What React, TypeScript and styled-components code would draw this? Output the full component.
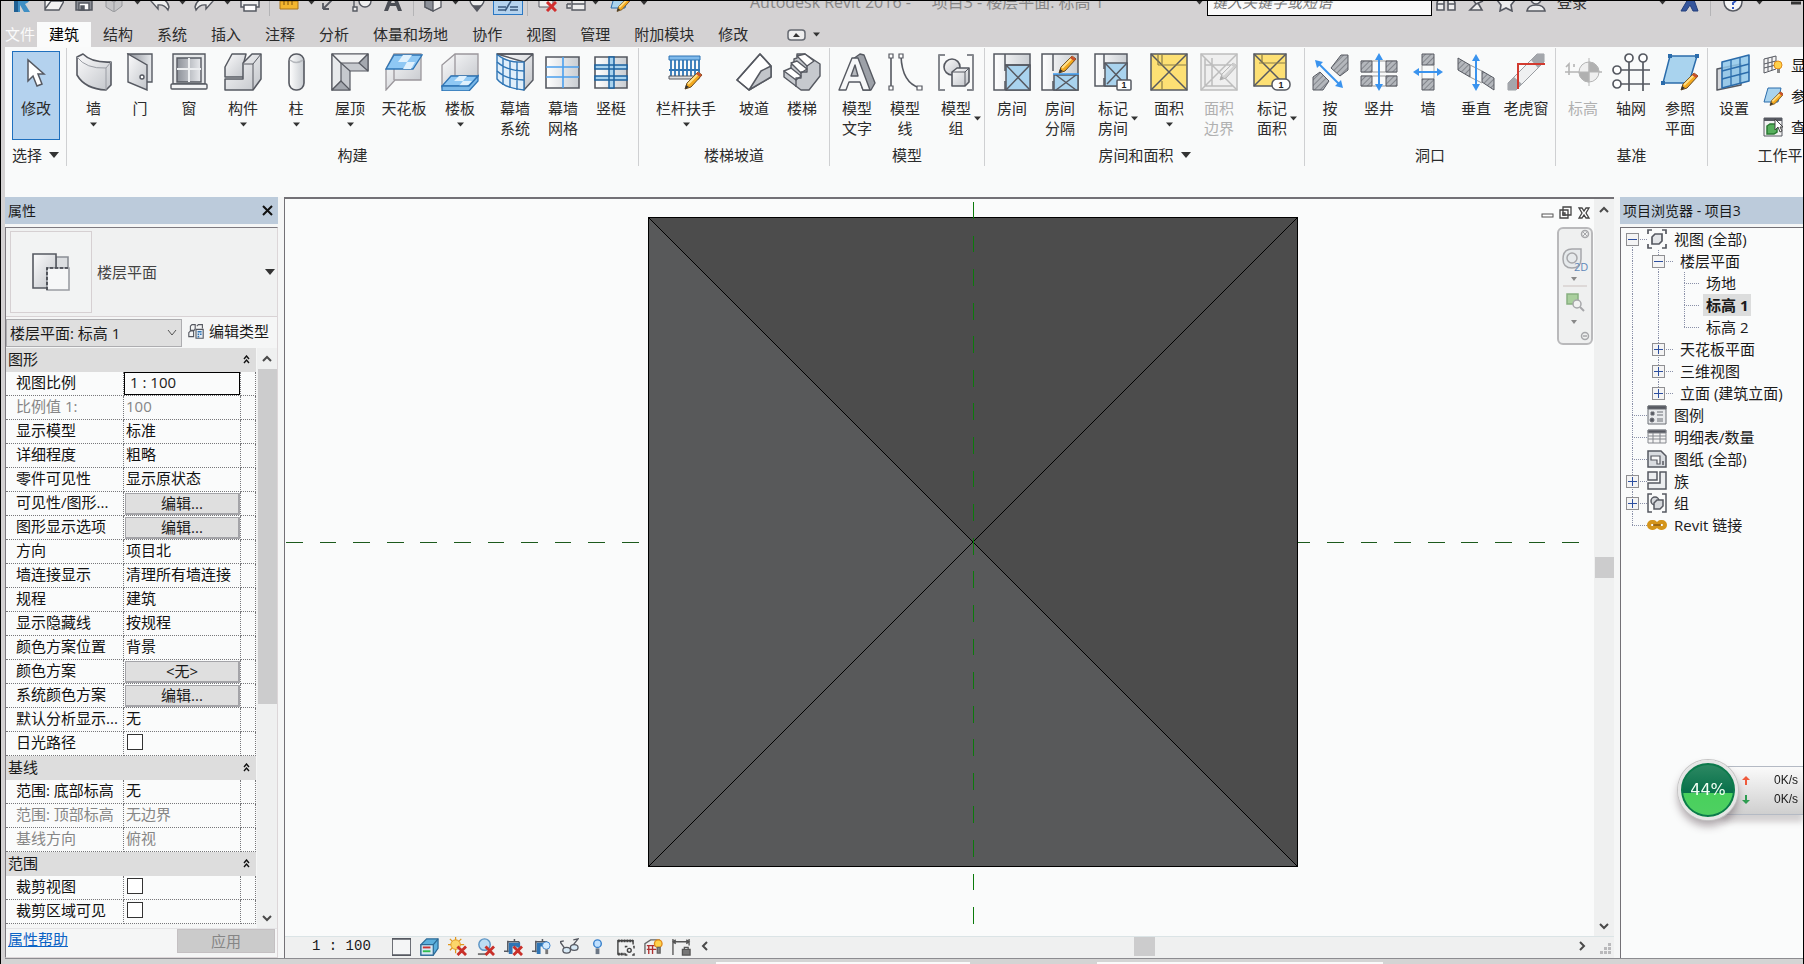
import React from 'react';
import styled, { createGlobalStyle } from 'styled-components';

const Global = createGlobalStyle`
  *, *::before, *::after { box-sizing: border-box; }
  html, body { margin: 0; background: #d4d4d4; }
  body, button, input, select {
    font-family: "Open Sans", "Noto Sans CJK SC", sans-serif;
    font-size: 15px;
    line-height: 20px;
    color: #1a1a1a;
  }
  button { padding: 0; border: 0; background: none; cursor: pointer; }
  svg { display: block; flex: none; }
`;

/* ---------- shell ---------- */

const Frame = styled.div`
  display: flex;
  flex-direction: column;
  height: 100vh;
  min-height: 640px;
  overflow: hidden;
  border: solid #000;
  border-width: 1px 1px 0 1px;
  padding-left: 4px;
  background: #d4d2d3;
`;

const TitleBar = styled.header`
  flex: none;
  height: 21px;
  overflow: hidden;
`;

const TitleItems = styled.div`
  display: flex;
  align-items: center;
  height: 32px;
  margin-top: -15px;
`;

const QuickTool = styled.button<{ $w: number; $active?: boolean }>`
  display: flex;
  flex: none;
  align-items: center;
  justify-content: center;
  width: ${p => p.$w}px;
  height: 26px;
  ${p => p.$active && 'background:#b5d3ee;border:1px solid #2a78c4;'}
`;

const QuickGap = styled.span<{ $w: number }>`
  flex: none;
  width: ${p => p.$w}px;
`;

const QuickRule = styled.span`
  flex: none;
  width: 1px;
  height: 28px;
  background: #b4b4b6;
`;

const WindowTitle = styled.h1`
  flex: 1;
  margin: 0;
  padding-left: 99px;
  font-size: 16px;
  font-weight: 400;
  line-height: 20px;
  color: #868686;
  white-space: pre;
  overflow: hidden;
`;

const Search = styled.input`
  flex: none;
  width: 225px;
  height: 27px;
  padding: 0 4px;
  border: 1px solid #000;
  border-radius: 0;
  background: #fafafa;
  font-style: italic;
  &::placeholder { color: #777; opacity: 1; }
`;

const SignIn = styled.button`
  flex: none;
  width: 40px;
  height: 22px;
  color: #333;
`;

const Tabs = styled.nav`
  display: flex;
  flex: none;
  align-items: stretch;
  height: 25px;
`;

const Tab = styled.button<{ $file?: boolean; $active?: boolean }>`
  flex: none;
  padding: ${p => (p.$file ? '0 2px 0 0' : '0 12px')};
  line-height: 25px;
  color: ${p => (p.$file ? '#fafafa' : '#2b2b2b')};
  ${p => p.$active && 'background:#fafbfb;color:#000;'}
`;

const Collapse = styled.button`
  display: flex;
  align-items: center;
  gap: 7px;
  margin-left: 27px;
`;

/* ---------- ribbon ---------- */

const Ribbon = styled.div`
  display: flex;
  flex: none;
  height: 150px;
  padding-top: 1px;
  overflow: hidden;
  background: #f9fafa;
`;

const Group = styled.section<{ $w: number }>`
  display: flex;
  flex: none;
  flex-direction: column;
  width: ${p => p.$w}px;
  height: 118px;
  border-right: 1px solid #cfd0d2;
`;

const GroupTools = styled.div`
  display: flex;
  flex: 1;
  padding-left: 3px;
`;

const GroupTitle = styled.h2`
  display: flex;
  align-items: center;
  justify-content: center;
  gap: 7px;
  height: 22px;
  margin: 0;
  font-size: 15px;
  font-weight: 400;
  color: #2b2b2b;
  white-space: nowrap;
`;

const Tool = styled.button<{ $w: number; $dim?: boolean }>`
  display: flex;
  flex: none;
  flex-direction: column;
  align-items: center;
  width: ${p => p.$w}px;
  height: 94px;
  padding-top: 5px;
  color: ${p => (p.$dim ? '#b0b0b0' : '#2b2b2b')};
  white-space: pre;
`;

const ToolText = styled.span`
  display: grid;
  grid-template-columns: 1fr auto 1fr;
  align-items: center;
  align-self: stretch;
  margin-top: 7px;
`;

const ToolLabel = styled.span`
  grid-column: 2;
  text-align: center;
`;

const SideCaret = styled.span`
  padding-left: 3px;
`;

const BelowCaret = styled.span`
  margin-top: 4px;
`;

const ModifyTool = styled(Tool)`
  height: 89px;
  margin: 3px 0 0 4px;
  padding-top: 1px;
  border: 1px solid #1f70be;
  background: #b4d2ee;
`;

const SmallTools = styled.div`
  display: flex;
  flex-direction: column;
  padding: 1px 0 0 6px;
`;

const SmallTool = styled.button`
  display: flex;
  align-items: center;
  gap: 8px;
  height: 31px;
  white-space: nowrap;
`;

/* ---------- docked panels ---------- */

const Main = styled.main`
  display: flex;
  flex: 1;
  gap: 6px;
  min-height: 0;
  background: #f5f6f6;
`;

const Dock = styled.aside<{ $w: number }>`
  display: flex;
  flex: none;
  flex-direction: column;
  gap: 3px;
  width: ${p => p.$w}px;
  min-height: 0;
`;

const DockTitle = styled.div`
  display: flex;
  flex: none;
  align-items: center;
  justify-content: space-between;
  height: 27px;
  padding: 0 5px 0 3px;
  background: #bccbdb;
  font-size: 14px;
`;

const PropsBox = styled.div`
  display: flex;
  flex: 1;
  flex-direction: column;
  min-height: 0;
  border: 1px solid #7d7a80;
  border-right-color: #dcd6d8;
  border-bottom-color: #dcd6d8;
  background: #f5f6f6;
`;

const TypePicker = styled.button`
  display: flex;
  flex: none;
  align-items: center;
  height: 89px;
  padding: 0 2px 0 4px;
  border-bottom: 1px solid #d8d2d4;
  background: #f0f1f1;
  color: #444;
  text-align: left;
`;

const TypeThumb = styled.span`
  display: flex;
  align-items: center;
  justify-content: center;
  width: 82px;
  height: 82px;
  border: 1px solid #d6d0d2;
  background: #f2f3f3;
`;

const TypeName = styled.span`
  flex: 1;
  padding-left: 5px;
`;

const InstanceRow = styled.div`
  display: flex;
  flex: none;
  align-items: center;
  height: 31px;
`;

const SelectWrap = styled.div`
  display: grid;
  align-items: center;
  width: 176px;
  & > * { grid-area: 1 / 1; }
  & > svg { justify-self: end; margin-right: 5px; pointer-events: none; }
`;

const InstanceSelect = styled.select`
  appearance: none;
  width: 100%;
  height: 28px;
  padding: 0 20px 0 3px;
  border: 1px solid #adadb0;
  border-radius: 0;
  background: #dfdfdf;
`;

const EditType = styled.button`
  display: flex;
  align-items: center;
  gap: 5px;
  padding: 0 0 4px 6px;
`;

const GridArea = styled.div`
  display: flex;
  flex: 1;
  min-height: 0;
  overflow: hidden;
`;

const GridClip = styled.div`
  flex: 1;
  overflow: hidden;
`;

const PropTable = styled.table`
  width: 250px;
  table-layout: fixed;
  border-spacing: 0;
  background: #fafbfb;
`;

const SectionHead = styled.th`
  height: 24px;
  padding: 0 6px 2px 2px;
  background: #dddddd;
  font-weight: 400;
  text-align: left;
`;

const SectionInner = styled.span`
  display: flex;
  align-items: center;
  justify-content: space-between;
`;

const Cell = styled.td<{ $name?: boolean; $dim?: boolean; $flush?: boolean }>`
  height: 24px;
  padding: ${p => (p.$name ? '0 0 3px 10px' : p.$flush ? '0' : '0 0 3px 2px')};
  border-right: 1px dotted #77777a;
  border-bottom: 1px dotted #77777a;
  color: ${p => (p.$dim ? '#868686' : '#111')};
  white-space: nowrap;
  overflow: hidden;
`;

const ValueInput = styled.input`
  display: block;
  width: 116px;
  height: 23px;
  padding: 0 5px 3px;
  border: 1px solid #000;
  border-radius: 0;
  background: #fafbfb;
`;

const ValueButton = styled.button`
  display: block;
  width: 115px;
  height: 22px;
  margin-left: 1px;
  border: 1px solid #a4a4a8;
  border-right-width: 2px;
  border-bottom-width: 2px;
  background: #dfdfdf;
  line-height: 18px;
`;

const Check = styled.input`
  appearance: none;
  display: block;
  width: 16px;
  height: 16px;
  margin: 0 0 0 1px;
  border: 1px solid #333;
  background: #fff;
`;

const ScrollV = styled.div`
  display: flex;
  flex: none;
  flex-direction: column;
  align-items: center;
  width: 20px;
  background: #eff0f0;
`;

const ScrollButton = styled.button`
  display: flex;
  flex: none;
  align-items: center;
  justify-content: center;
  width: 20px;
  height: 21px;
`;

const Grow = styled.span<{ $n: number }>`
  flex: ${p => p.$n} 1 0;
`;

const ThumbV = styled.span<{ $n?: number }>`
  width: 19px;
  ${p => (p.$n ? `flex: ${p.$n} 1 0;` : 'flex: none; height: 21px;')}
  background: #cccccd;
`;

const PropsFooter = styled.div`
  display: flex;
  flex: none;
  align-items: flex-start;
  justify-content: space-between;
  height: 29px;
  padding: 0 2px;
  border-top: 1px solid #e4e4e6;
`;

const HelpLink = styled.a`
  color: #0b63c5;
`;

const Apply = styled.button`
  width: 98px;
  height: 24px;
  border: 1px solid #c4c0c2;
  background: #cbcbcb;
  color: #868686;
`;

/* ---------- view ---------- */

const View = styled.section`
  display: flex;
  flex: 1;
  flex-direction: column;
  min-width: 0;
  border-top: 2px solid #737176;
  border-left: 1px solid #737176;
`;

const ViewBody = styled.div`
  display: flex;
  flex: 1;
  min-height: 0;
`;

const Canvas = styled.div`
  position: relative;
  flex: 1;
  min-width: 0;
  background: #fafbfb;
`;

const Drawing = styled.svg`
  width: 100%;
  height: 100%;
`;

const MdiButtons = styled.div`
  position: absolute;
  top: 7px;
  right: 3px;
  display: flex;
  gap: 4px;
`;

const NavBar = styled.div`
  position: absolute;
  top: 28px;
  right: 1px;
  display: flex;
  flex-direction: column;
  align-items: center;
  width: 36px;
  height: 118px;
  border: 2px solid #b9b9bb;
  border-radius: 6px;
  background: #eff0f0;
`;

const ViewBar = styled.div`
  display: flex;
  flex: none;
  align-items: center;
  height: 22px;
  padding-bottom: 3px;
  border-top: 1px solid #dbe4e6;
  background: #eff0f0;
`;

const ScaleButton = styled.button`
  width: 102px;
  padding-left: 27px;
  font-family: "Liberation Mono", monospace;
  font-size: 14px;
  text-align: left;
  white-space: pre;
`;

const ViewTool = styled.button`
  display: flex;
  align-items: center;
  justify-content: center;
  width: 28px;
  height: 20px;
`;

const ThumbH = styled.span`
  width: 21px;
  height: 19px;
  background: #cccccd;
`;

/* ---------- browser ---------- */

const TreeBox = styled.div`
  flex: 1;
  border-top: 1px solid #737176;
  border-left: 1px solid #737176;
  background: #fafbfb;
  overflow: hidden;
`;

const TreeRow = styled.div`
  display: flex;
  align-items: center;
  height: 22px;
  white-space: nowrap;
`;

const Toggle = styled.button`
  display: block;
`;

const TreeLabel = styled.span<{ $on?: boolean }>`
  margin-left: 4px;
  padding: 0 3px;
  line-height: 22px;
  ${p => p.$on && 'font-weight:700;background:#dcdddd;'}
`;

/* ---------- status and floating meter ---------- */

const StatusBar = styled.footer`
  display: flex;
  flex: none;
  align-items: flex-end;
  height: 6px;
  border-top: 1px solid #8c8c90;
  background: #d4d4d4;
`;

const StatusSlot = styled.span<{ $w: number; $before: number }>`
  width: ${p => p.$w}px;
  height: 2px;
  margin-left: ${p => p.$before}px;
  background: #fafafa;
`;

const Meter = styled.div`
  position: fixed;
  right: 1px;
  bottom: 144px;
  display: flex;
  align-items: center;
  width: 125px;
`;

const Ball = styled.div`
  z-index: 1;
  display: flex;
  flex: none;
  align-items: center;
  justify-content: center;
  width: 60px;
  height: 60px;
  margin-right: -16px;
  border: 3px solid #e6e6e6;
  border-radius: 50%;
  background: linear-gradient(#2f8a64 0, #07704a 55%, #48d05c 55%, #4fd062 100%);
  box-shadow: 0 0 0 1px #c4c4c4, inset 0 0 0 2px #0c7a4c, 0 6px 9px rgba(60, 40, 50, 0.4);
  font-family: "DejaVu Sans", sans-serif;
  font-size: 16px;
  color: #f2fff4;
`;

const Speeds = styled.div`
  display: flex;
  flex: 1;
  flex-direction: column;
  justify-content: center;
  height: 49px;
  padding: 0 5px 0 20px;
  border: solid #b4bac4;
  border-width: 1px 0;
  background: linear-gradient(#fafafa, #cfcfcf);
  box-shadow: 0 7px 6px rgba(90, 80, 85, 0.25);
`;

const Speed = styled.div`
  display: flex;
  align-items: center;
  justify-content: space-between;
  height: 19px;
  font-family: "Liberation Sans", sans-serif;
  font-size: 12px;
  line-height: 19px;
`;

/* ---------- drawings ---------- */

const INK = '#565961';
const BLUE = '#2f75b5';
const SKY = '#a9d3ee';

const Caret = ({ big }: { big?: boolean }) => (
  <svg width={big ? 10 : 7} height={big ? 6 : 5} viewBox="0 0 10 6">
    <path d="M0 0h10L5 6z" fill="#333" />
  </svg>
);

const Chevron = ({ dir, size = 10 }: { dir: 'up' | 'down' | 'left' | 'right'; size?: number }) => {
  const angle = { up: 0, right: 90, down: 180, left: 270 }[dir];
  return (
    <svg width={size} height={size} viewBox="0 0 10 10" fill="none" stroke="#4a4a4a" strokeWidth="2">
      <path d="M1 7 5 3l4 4" transform={`rotate(${angle} 5 5)`} />
    </svg>
  );
};

const Defs = () => (
  <svg width="0" height="0" aria-hidden="true">
    <defs>
      <linearGradient id="metal" x1="0" y1="0" x2="1" y2="1">
        <stop offset="0" stopColor="#fbfbfc" />
        <stop offset="1" stopColor="#c2c5ca" />
      </linearGradient>
      <linearGradient id="steel" x1="0" y1="0" x2="1" y2="0">
        <stop offset="0" stopColor="#8d9199" />
        <stop offset="1" stopColor="#e8eaed" />
      </linearGradient>
      <linearGradient id="pale" x1="0" y1="0" x2="1" y2="0">
        <stop offset="0" stopColor="#ffffff" />
        <stop offset="1" stopColor="#c9cdd2" />
      </linearGradient>
      <pattern id="hatch" width="4" height="4" patternUnits="userSpaceOnUse" patternTransform="rotate(45)">
        <rect width="4" height="4" fill="#b4b7bc" />
        <path d="M0 0v4" stroke="#72757c" strokeWidth="1.5" />
      </pattern>
    </defs>
  </svg>
);

const Pencil = ({ x, y, gray }: { x: number; y: number; gray?: boolean }) => (
  <g transform={`translate(${x} ${y})`} strokeLinejoin="round">
    <path d="M0 18 2 12 13 1l4 3L6 16z" fill={gray ? '#d2d2d2' : '#f3a91e'} stroke={gray ? '#b4b4b4' : '#6a4a20'} strokeWidth="1" />
    <path d="M3 13 14 2" stroke={gray ? '#eee' : '#ffe08a'} strokeWidth="2" />
    <path d="M13 1l4 3-2 2-4-3z" fill={gray ? '#ccc' : '#c9502d'} stroke="none" />
    <path d="M0 18 1 14l3 2z" fill={gray ? '#aaa' : '#333'} stroke="none" />
  </g>
);

const One = ({ x, y }: { x: number; y: number }) => (
  <text x={x} y={y} fontSize="9" fontWeight="700" textAnchor="middle" fill="#222" stroke="none" fontFamily="Liberation Sans, sans-serif">
    1
  </text>
);

const art: Record<string, React.ReactNode> = {
  arrow: <path d="M11 7v21l5-5 4 10 5-2-4-10h6z" fill="#fff" stroke={INK} strokeWidth="1.5" />,
  wall: (
    <g stroke={INK} strokeWidth="1.6" strokeLinejoin="round">
      <path d="M2 4 8 1q9 9 28 8v23l-5 5Q10 36 2 22z" fill="url(#metal)" />
      <path d="M2 4q9 12 29 11v22M31 15l5-6" fill="none" stroke="#9a9da4" strokeWidth="1" />
    </g>
  ),
  door: (
    <g stroke={INK} strokeWidth="1.4">
      <path d="M7 1h24v28h-6z" fill="url(#steel)" />
      <path d="M7 1 26 12v25L7 29z" fill="url(#metal)" />
      <circle cx="21" cy="24" r="2" fill="#fff" />
    </g>
  ),
  window: (
    <g stroke={INK} strokeWidth="1.4">
      <path d="M3 1h32v30H3z" fill="#e6e8ea" />
      <path d="M7 5h24v24H7z" fill="url(#steel)" />
      <path d="M19 5v24M7 16h24" stroke="#eceef0" strokeWidth="2" />
      <rect x="1" y="31" width="36" height="5" rx="1" fill="#f3f4f5" />
    </g>
  ),
  component: (
    <g stroke={INK} strokeWidth="1.5" strokeLinejoin="round" fill="url(#metal)">
      <path d="M1 14 8 1h14l-2 8v15H1z" />
      <path d="M1 26h18V10l9-9h9v25L29 37H1z" />
      <path d="M29 37V11h-9M29 11l8-10" fill="none" strokeWidth="1" />
    </g>
  ),
  column: (
    <g stroke={INK} strokeWidth="1.6">
      <rect x="12" y="1" width="15" height="36" rx="7" fill="url(#pale)" />
      <path d="M13 7q6 5 13 0" fill="none" stroke="#b4b7bc" />
    </g>
  ),
  roof: (
    <g stroke={INK} strokeWidth="1.2" strokeLinejoin="round">
      <path d="M1 1h36v17H19v19H1z" fill="#c6c9ce" />
      <path d="M1 1 10 10v18L1 37z" fill="#e8eaec" />
      <path d="M1 1h36l-9 9H10z" fill="#f2f3f4" />
      <path d="M28 10 37 1v17z" fill="#a4a8af" />
      <path d="M10 28 1 37h18z" fill="#a4a8af" />
      <path d="M10 10l9 8" />
    </g>
  ),
  ceiling: (
    <g strokeWidth="1.3" stroke="#9b979c">
      <path d="M9 1h27v26H10L1 37V16z" fill="url(#metal)" />
      <path d="M9 16v11" />
      <path d="M9 2h28l-9 14H1z" fill="#8fc8f4" stroke={BLUE} />
      <path d="M18 2h9l-5 7h8l-4 7h-8l4-7h-9z" fill="#e0f1fd" stroke="none" />
    </g>
  ),
  floor: (
    <g strokeWidth="1.3" stroke="#9b979c">
      <path d="M14 1h23v22H11L1 34V12z" fill="url(#metal)" />
      <path d="M14 1v22" />
      <path d="M10 23h27L28 33H1z" fill="#8fc8f4" stroke={BLUE} />
      <path d="M18 23h8l-4 5h9l-5 5h-8l4-5h-9z" fill="#e0f1fd" stroke="none" />
      <path d="M1 33h27l9-10v5l-9 10H1z" fill="#7cb9e8" stroke={BLUE} />
    </g>
  ),
  curtain: (
    <g strokeWidth="1.4" strokeLinejoin="round">
      <path d="M1 1h36l-9 8zM28 9l9-8v26l-9 10z" fill="url(#metal)" stroke={INK} />
      <path d="M1 1q9 9 27 8v28Q8 35 1 26z" fill="#dfeefa" stroke={BLUE} />
      <path d="M1 9q10 9 27 9M1 18q10 9 27 9M7 6v26M14 8v27M21 9v28" fill="none" stroke={BLUE} />
      <path d="M1 1h36" stroke={INK} />
    </g>
  ),
  cgrid: (
    <g>
      <path d="M2 4h33v31H2z" fill="url(#pale)" stroke={INK} strokeWidth="1.6" />
      <path d="M19 4v31M2 14h33M2 24h33" stroke="#4ba0ee" strokeWidth="1.6" />
    </g>
  ),
  mullion: (
    <g>
      <path d="M3 4h32v31H3z" fill="url(#pale)" stroke={INK} strokeWidth="1.6" />
      <path d="M3 12h32v4H3zM3 23h32v4H3zM17 4h5v31h-5z" fill={SKY} stroke="#1b62a0" strokeWidth="1.5" />
    </g>
  ),
  railing: (
    <g>
      <path d="M2 3h31v4H2z" fill="#7fb9ea" stroke={BLUE} />
      <path d="M4 7v16M8 7v16M12 7v16M16 7v16M20 7v16M24 7v16M28 7v16M32 7v16M2 17h31" stroke={BLUE} strokeWidth="1.8" />
      <path d="M2 23h30v3H2z" fill="#ddd" stroke={INK} />
      <Pencil x={18} y={18} />
    </g>
  ),
  ramp: (
    <g stroke={INK} strokeWidth="1.5" strokeLinejoin="round">
      <path d="M2 27 25 1l11 12v11L14 37z" fill="#fff" />
      <path d="m14 37 12-19 10-5v11z" fill="#c2c5ca" stroke="none" />
      <path d="M2 27 25 1l11 12v11L14 37zM36 13l-10 5-12 19" fill="none" />
    </g>
  ),
  stair: (
    <g stroke={INK} strokeWidth="1.4" strokeLinejoin="round">
      <path d="M1 18v6l17 13h8l11-14V11L22 1h-8v4l-3 1v5l-3 1v5z" fill="#c6c9ce" />
      <path d="M14 3 22 1l9 7-7 5zM8 10l6-2 10 8-6 4zM1 18l7-3 10 8-5 4z" fill="#fff" />
      <path d="M24 13v6h-6v6h-5v9" fill="none" />
    </g>
  ),
  letterA: (
    <g stroke={INK} strokeWidth="1.4" strokeLinejoin="round">
      <path d="m15 6 7-5 4 1 11 28-4 7h-8z" fill="#9da1a8" />
      <path d="M1 37 14 5h6l12 32h-7l-3-8H11l-3 8z" fill="#f6f7f8" />
      <path d="m13 23 4-11 3 11z" fill="#b4b7bc" />
    </g>
  ),
  mline: (
    <g stroke={INK} strokeWidth="1.6" fill="none">
      <path d="M5 3v32M15 3q1 27 19 32" />
      <path d="M3 1h4v4H3zM3 33h4v4H3zM13 1h4v4h-4zM31 33h5v4h-5z" fill="#fff" strokeWidth="1.2" />
    </g>
  ),
  mgroup: (
    <g stroke={INK} strokeWidth="1.6" strokeLinejoin="round">
      <path d="M8 2H2v35h6M30 2h6v35h-6" fill="none" stroke="#85888e" strokeWidth="2" />
      <circle cx="15" cy="14" r="8" fill="url(#metal)" />
      <path d="m15 19 5-4h12v14l-4 4H15z" fill="url(#metal)" />
      <path d="M15 19h13v14M28 19l4-4" fill="none" strokeWidth="1" />
    </g>
  ),
  room: (
    <g stroke={INK} strokeWidth="1.5">
      <path d="M1 1h36v36H1z" fill="url(#pale)" />
      <path d="M13 12h24v25H13z" fill={SKY} />
      <path d="m13 12 24 25M37 12 13 37M12 1v17M12 28v9M12 12h25" />
    </g>
  ),
  roomSplit: (
    <g stroke={INK} strokeWidth="1.5">
      <path d="M1 1h36v36H1z" fill="url(#pale)" />
      <path d="M13 22h24v15H13z" fill={SKY} />
      <path d="m15 22 20 15M35 22 15 37M12 1v17M12 28v9" />
      <path d="M12 21h26" stroke="#3f9cf0" />
      <Pencil x={18} y={2} />
    </g>
  ),
  tagRoom: (
    <g stroke={INK} strokeWidth="1.5">
      <path d="M1 1h32v32H1z" fill="url(#pale)" />
      <path d="M11 10h22v23H11z" fill={SKY} />
      <path d="m11 10 20 21M33 10 13 31M10 1v15M10 25v8" />
      <rect x="23" y="27" width="14" height="10" rx="1" fill="#fff" />
      <One x={30} y={35} />
    </g>
  ),
  area: (
    <g stroke={INK} strokeWidth="1.5">
      <path d="M1 1h36v36H1z" fill="#fde074" />
      <path d="m1 1 36 36M37 1 1 37" />
      <path d="M12 1v10M12 28v9M8 12h29M8 12V1" stroke="#8a7c48" strokeWidth="1.2" />
    </g>
  ),
  areaEdge: (
    <g stroke="#bdbdbd" strokeWidth="1.5">
      <path d="M1 1h36v36H1z" fill="#efefef" />
      <path d="m1 1 36 36M37 1 1 37M12 5v28M5 12h28M5 33h28M5 5v28" />
      <Pencil x={20} y={9} gray />
    </g>
  ),
  tagArea: (
    <g stroke={INK} strokeWidth="1.5">
      <path d="M1 1h32v32H1z" fill="#fde074" />
      <path d="m1 1 32 32M33 1 1 33" />
      <path d="M9 1v9M6 10h27" stroke="#8a7c48" strokeWidth="1.2" />
      <rect x="19" y="26" width="18" height="11" rx="5" fill="#fff" />
      <One x={28} y={35} />
    </g>
  ),
  openFace: (
    <g>
      <path d="m20 15 10-13h7v15l-8 6zM2 37V24l7-5 9 9-6 9z" fill="url(#hatch)" stroke={INK} />
      <path d="m8 11 20 20" stroke="#3a93ee" strokeWidth="2" />
      <path d="m4 7 8 2-6 6zM32 35l-8-2 6-6z" fill="#3a93ee" />
    </g>
  ),
  shaft: (
    <g>
      <path d="M1 8h36M1 19h36M1 23h36M1 33h36" stroke="#999" fill="none" />
      <path d="M1 8h11v11H1zM26 8h11v11H26zM1 23h11v10H1zM26 23h11v10H26z" fill="url(#hatch)" stroke={INK} />
      <path d="M19 5v28" stroke="#3a93ee" strokeWidth="2" />
      <path d="M19 0l4 7h-8zM19 38l4-7h-8z" fill="#3a93ee" />
    </g>
  ),
  wallOpen: (
    <g>
      <path d="M13 12v14M25 12v14" stroke="#aaa" />
      <path d="M13 1h12v11H13zM13 26h12v11H13z" fill="url(#hatch)" stroke={INK} />
      <path d="M8 19h22" stroke="#3a93ee" strokeWidth="2" />
      <path d="m4 19 6-4v8zM34 19l-6-4v8z" fill="#3a93ee" />
    </g>
  ),
  vertOpen: (
    <g>
      <path d="m1 5 12 7v12L1 17zM25 18l12 7v12l-12-8z" fill="url(#hatch)" stroke={INK} />
      <path d="m13 12 12 6M13 24l12 6" stroke="#999" />
      <path d="M19 6v27" stroke="#3a93ee" strokeWidth="2" />
      <path d="m19 1 4 7h-8zM19 38l4-7h-8z" fill="#3a93ee" />
    </g>
  ),
  dormer: (
    <g>
      <path d="M1 30 30 1h7v8L9 37H1z" fill="#eff0f1" stroke="#9a9da2" />
      <path d="m24 7 6-6h7v8l-6 6zM1 30l6-6 8 7-6 6H1z" fill="#a4a7ac" />
      <path d="M11 36V11h27" stroke="#d23a2f" strokeWidth="2" fill="none" />
    </g>
  ),
  level: (
    <g stroke="#b5b5b5" fill="none">
      <path d="M1 19h37M2 14l3-3v11M10 11v3" strokeWidth="1.6" />
      <circle cx="25" cy="19" r="10" fill="#efefef" />
      <path d="M25 9a10 10 0 0 1 10 10H25zM25 19v10a10 10 0 0 1-10-10z" fill="#b0b0b0" />
      <path d="M25 5v28" />
    </g>
  ),
  gridAxes: (
    <g stroke={INK} strokeWidth="1.7" fill="#fff">
      <path d="M17 8v30M31 8v30M8 17h30M8 31h30" />
      <circle cx="17" cy="5" r="4" />
      <circle cx="31" cy="5" r="4" />
      <circle cx="5" cy="17" r="4" />
      <circle cx="5" cy="31" r="4" />
    </g>
  ),
  refPlane: (
    <g>
      <path d="M9 3h27L28 30H2z" fill={SKY} stroke="#2b6cab" strokeWidth="1.5" />
      <path d="M7 1h4v4H7zM34 1h4v4h-4zM0 28h4v4H0z" fill="#2b6cab" />
      <Pencil x={20} y={19} />
    </g>
  ),
  setPlane: (
    <g strokeLinejoin="round">
      <path d="M2 16 26 11v21L2 37z" fill="#d5d8dc" stroke={INK} strokeWidth="1.5" />
      <path d="m7 9 27-7v26L7 35z" fill="#8fc7ea" fillOpacity="0.85" stroke="#2b6cab" strokeWidth="1.6" />
      <path d="M16 7v26M25 4v26M7 18l27-7M7 26l27-7" stroke="#2b6cab" strokeWidth="1.3" />
    </g>
  ),
  plan: (
    <g>
      <path d="M24 4h12v11H24z" fill="#dcdee1" stroke="#8b8e95" strokeWidth="1.6" />
      <path d="M1 1h23v14h-9v20H1z" fill="url(#metal)" stroke={INK} strokeWidth="1.6" />
      <path d="M15 15h22v22H15z" fill="#f6f7f8" stroke="#9a9da3" strokeWidth="1.6" />
      <path d="M15 37V15h22" fill="none" stroke="#3f4249" strokeWidth="1.6" strokeDasharray="3 2" />
    </g>
  ),
};

const Art = ({ name, size = 38 }: { name: string; size?: number }) => (
  <svg width={size} height={size} viewBox="0 0 38 38" aria-hidden="true">
    {art[name]}
  </svg>
);

const small: Record<string, React.ReactNode> = {
  logo: (
    <g>
      <path d="M3 0h8q8 0 8 6 0 4-5 6l5 8h-6l-4-7v7H3z" fill="#3f8fc4" />
      <path d="M3 0h4v20H3z" fill="#1f5f92" />
    </g>
  ),
  open: <path d="M1 17V4h7l2 2h7v4M1 17 7 9h13l-5 9H1z" fill="#f2f2f2" stroke={INK} strokeWidth="1.4" />,
  save: (
    <g stroke={INK} strokeWidth="1.5">
      <path d="M2 2h16v16H2z" fill="#8a8d94" />
      <path d="M5 11h10v7H5z" fill="#fff" />
      <path d="M7 14h3v4H7z" fill={INK} />
    </g>
  ),
  sync: <path d="m2 6 8-4 8 3v9l-8 6-8-5zM2 6l8 4 8-5M10 10v9" fill="#c6c6c8" stroke="#96979b" />,
  undo: <path d="M1 9 8 3v4q9-1 11 8l-1 3q-4-6-10-5v4z" fill="#eee" stroke={INK} strokeWidth="1.4" />,
  redo: <path d="m19 9-7-6v4Q3 6 1 15l1 3q4-6 10-5v4z" fill="#eee" stroke={INK} strokeWidth="1.4" />,
  print: (
    <g stroke={INK} strokeWidth="1.5">
      <path d="M4 1h12v6H4zM1 7h18v8H1z" fill="#eee" />
      <path d="M4 13h12v6H4z" fill="#fff" />
    </g>
  ),
  ruler: (
    <g>
      <path d="M1 9h18v8H1z" fill="#f3b62e" stroke="#a8741a" />
      <path d="M5 9v4M9 9v4M13 9v4" stroke="#7a5211" />
    </g>
  ),
  dim: <path d="M3 17 16 4M3 17v-6M3 17h6M2 6h6" stroke={INK} strokeWidth="1.8" fill="none" />,
  tag: (
    <g stroke={INK} strokeWidth="1.4" fill="#eee">
      <path d="M2 18V8h5" fill="none" />
      <circle cx="13" cy="9" r="6" />
      <path d="M1 15h4v4H1z" />
    </g>
  ),
  text: <path d="M1 19 8 1h4l7 18h-4l-2-5H7l-2 5zM8 11h4l-2-6z" fill="#4b4e55" fillRule="evenodd" />,
  cube: (
    <g stroke={INK} strokeWidth="1.3">
      <path d="m2 5 8-4 8 4v10l-8 4-8-4z" fill="#f1f1f1" />
      <path d="m2 5 8 4v10l-8-4z" fill="#8d9199" />
    </g>
  ),
  section: (
    <g stroke={INK} strokeWidth="1.4">
      <circle cx="10" cy="8" r="7" fill="#eee" />
      <path d="m6 14 4 5 4-5z" fill={INK} />
    </g>
  ),
  thin: <path d="M0 15h8M12 15h8M0 18h8M12 18h8M7 19 13 9" stroke="#3c5c80" strokeWidth="1.6" />,
  closeWin: (
    <g>
      <path d="M2 3h14v12H2z" fill="#eee" stroke={INK} />
      <path d="m10 10 9 9M19 10l-9 9" stroke="#d22f2f" strokeWidth="3" />
    </g>
  ),
  windows: <path d="M6 3h13v9H6zM6 12h13v6H6zM1 12h4M1 12v4h4" fill="#eee" stroke={INK} strokeWidth="1.4" />,
  edit: (
    <g>
      <path d="M5 2h13l-3 14H1z" fill={SKY} stroke="#2b6cab" />
      <g transform="translate(7 5) scale(0.8)">
        <Pencil x={0} y={0} />
      </g>
    </g>
  ),
  find: (
    <g fill="#eee" stroke={INK} strokeWidth="1.6">
      <path d="M3 5 6 1h2v17H1V11zM17 5l-3-4h-2v17h7V11zM8 8h4" />
      <path d="M1 12h7M12 12h7" />
    </g>
  ),
  dish: <path d="m4 3 6 9 7-3M10 12l-6 6h12l-4-7M11 5l5-3" fill="#eee" stroke={INK} strokeWidth="1.6" />,
  star: <path d="m10 1 3 6 6 1-4 5 1 6-6-3-6 3 1-6-4-5 6-1z" fill="#eee" stroke={INK} strokeWidth="1.6" />,
  user: (
    <g fill="#eee" stroke={INK} strokeWidth="1.6">
      <circle cx="10" cy="7" r="5" />
      <path d="M1 19q1-6 9-6t9 6z" />
    </g>
  ),
  exchange: <path d="M2 19 12 2h4l-1 6 4 11h-5l-3-6-4 6z" fill="#34559c" stroke="#24407c" />,
  help: (
    <g>
      <circle cx="10" cy="10" r="9" fill="#f5f5f5" stroke={INK} strokeWidth="1.5" />
      <path d="M7 8q0-3 3-3t3 3q0 1-3 3v2M10 15v2" stroke="#3158c0" strokeWidth="2" fill="none" />
    </g>
  ),
  detail: <path d="M0 2h20v17H0z" fill="#f4f5f6" stroke={INK} strokeWidth="1.8" />,
  style: (
    <g stroke="#2b6a96" strokeWidth="1.3">
      <path d="m1 8 6-6h12v10l-5 7H1z" fill="#5cb0dd" />
      <path d="M1 8h13v11H1z" fill="#d6e8f2" />
      <path d="M14 8l5-6" />
      <path d="M3 11h8" stroke="#c33" strokeWidth="2" />
      <path d="M3 15h8" stroke="#2ebd4e" strokeWidth="2" />
    </g>
  ),
  sunOff: (
    <g>
      <path d="M8 0v17M0 8h17M2 2l12 12M14 2 2 14" stroke="#e0961c" strokeWidth="1.3" />
      <circle cx="8" cy="8" r="5" fill="#fbd56a" stroke="#e0961c" />
      <path d="m10 10 9 9M19 10l-9 9" stroke="#c8302a" strokeWidth="3" />
    </g>
  ),
  shadeOff: (
    <g>
      <path d="M2 18h9" stroke="#777" strokeWidth="2" />
      <circle cx="9" cy="8" r="6" fill="#bcdcf4" stroke="#5a93c4" strokeWidth="1.5" />
      <path d="m10 10 9 9M19 10l-9 9" stroke="#c8302a" strokeWidth="3" />
    </g>
  ),
  cropOff: (
    <g>
      <path d="M0 15h5M4 4v12M4 5h12M16 5v10M11 2v3" stroke={INK} strokeWidth="1.6" fill="none" />
      <path d="M7 18V8h8v3" stroke={BLUE} strokeWidth="4" fill="none" />
      <path d="m10 10 9 9M19 10l-9 9" stroke="#c8302a" strokeWidth="3" />
    </g>
  ),
  cropShow: (
    <g>
      <path d="M0 15h5M4 4v12M4 5h12M11 2v3" stroke={INK} strokeWidth="1.6" fill="none" />
      <path d="M7 18V8h7" stroke={BLUE} strokeWidth="4" fill="none" />
      <circle cx="15" cy="9" r="4" fill="#d3ebff" stroke="#3a82cc" />
      <path d="M14 13h3v5h-3z" fill="#777" />
    </g>
  ),
  glasses: (
    <g fill="none" stroke={INK} strokeWidth="1.4">
      <path d="M0 5 5 12M4 4 0 5M11 12l8-10-5 1" />
      <ellipse cx="7" cy="14" rx="4" ry="3" fill="#d7e9f5" />
      <ellipse cx="15" cy="11" rx="4" ry="3" fill="#d7e9f5" />
    </g>
  ),
  bulb: (
    <g>
      <circle cx="10" cy="7" r="4" fill="#bfe0ff" stroke="#3a82cc" strokeWidth="1.5" />
      <path d="M8 12h4v6H8z" fill="#6b7684" />
    </g>
  ),
  reveal: (
    <g fill="none" stroke="#444" strokeWidth="1.5">
      <path d="M9 18H2V4h16v4" />
      <path d="M2 4h16M2 18h7" strokeDasharray="2 1" strokeWidth="3" />
      <circle cx="14" cy="14" r="2" />
      <path d="M10 11v-1h2M18 10h1v2M10 17v2h2M19 17v2h-2" />
    </g>
  ),
  analytic: (
    <g fill="none" stroke="#666" strokeWidth="1.4">
      <path d="M1 18V7l6-4h9v13" />
      <path d="M5 9v9M9 9v9M3 13h10M3 9h10" stroke="#b03030" />
      <circle cx="15" cy="7" r="4" fill="#ffd24a" stroke="#e08a1c" />
      <path d="M14 11h3v6h-3z" fill="#888" />
    </g>
  ),
  constraint: (
    <g fill="none" stroke="#555" strokeWidth="1.4">
      <path d="M1 2v17M18 2v7M1 5h17M4 3 1 5l3 2M15 3l3 2-3 2" />
      <path d="M11 13h8v6h-8z" fill="#777" />
      <path d="M13 13v-2h4v2" />
    </g>
  ),
  typeEdit: (
    <g fill="none" stroke={INK} strokeWidth="1.4">
      <path d="M3 4l2-2h4v5l-1 2H3zM11 4l2-2h5v5M1 12l2-2h4v7H1z" />
      <path d="M10 8h9v11h-9z" fill="#e9eef4" />
      <path d="M12 11h5M12 14h2M15 14h2M12 17h2" stroke={BLUE} strokeWidth="2" />
    </g>
  ),
  showPlane: (
    <g>
      <path d="m1 4 12-3v13L1 18zM5 3v13M9 2v13M1 9l12-3M1 13l12-3" fill="#f4f4f4" stroke={INK} />
      <circle cx="15" cy="10" r="4" fill="#ffd24a" stroke="#e08a1c" />
      <path d="M14 14h3v4h-3z" fill="#888" />
    </g>
  ),
  viewer: (
    <g>
      <path d="M1 1h18v18H1z" fill="#f2f2f2" stroke={INK} />
      <path d="M1 1h18v3H1z" fill={INK} />
      <path d="m4 9 3-2h7v8l-3 2H4z" fill="#57b05c" stroke="#2b7a33" strokeWidth="1.5" />
      <path d="M12 2v11l3-3 2 5 2-1-2-4h3z" fill="#fff" stroke="#444" />
    </g>
  ),
  views: (
    <g fill="none" stroke={INK} strokeWidth="1.7">
      <path d="M5 1H1v4M15 1h4v4M1 15v4h4M19 15v4h-4" />
      <path d="m5 8 3-3h7v7l-3 3H5z" fill="#e4e6e9" />
    </g>
  ),
  legend: (
    <g stroke="#6b6e75">
      <path d="M1 1h18v18H1z" fill="#e8eaec" />
      <path d="M1 1h18v3H1z" fill={INK} />
      <path d="M4 7h3v3H4z" fill={INK} />
      <circle cx="5" cy="15" r="2" fill={INK} />
      <path d="M10 7h6M10 10h6M10 14h6M10 16h6" />
    </g>
  ),
  schedule: (
    <g stroke="#85888e">
      <path d="M1 3h18v13H1z" fill="#f4f4f4" />
      <path d="M1 3h18v3H1z" fill={INK} />
      <path d="M1 9h18M1 12h18M6 6v10M13 6v10" />
    </g>
  ),
  sheet: (
    <g stroke={INK} strokeWidth="1.5" fill="#d9dce0">
      <path d="M1 2h13l5 5v11H1z" />
      <path d="M4 7h9v8h-3v-4H4z" fill="#f8f8f8" strokeWidth="1.2" />
      <path d="M16 12v4" />
    </g>
  ),
  family: (
    <g stroke={INK} strokeWidth="1.5" fill="#eceef0">
      <path d="M1 1h9v8H1z" />
      <path d="M13 1h6v17H1v-6h12z" />
    </g>
  ),
  group: (
    <g stroke={INK} strokeWidth="1.5" fill="#d6d9dd">
      <path d="M5 1H1v18h4M15 1h4v18h-4" fill="none" />
      <circle cx="8" cy="8" r="4" />
      <path d="m7 10 3-3h6v6l-3 3H7z" />
    </g>
  ),
  link: (
    <g fill="none" stroke="#d4941a" strokeWidth="4">
      <rect x="2" y="7" width="7" height="6" rx="3" />
      <rect x="11" y="7" width="7" height="6" rx="3" />
      <path d="M6 10h8" stroke="#8a5a10" strokeWidth="1.5" />
    </g>
  ),
};

const Icon = ({ name, size = 20 }: { name: string; size?: number }) => (
  <svg width={size} height={size} viewBox="0 0 20 20" aria-hidden="true">
    {small[name]}
  </svg>
);

/* ---------- data ---------- */

type ToolData = { icon: string; text: string; w: number; caret?: 'below' | 'side'; dim?: boolean };
type GroupData = { title: string; w: number; tools: ToolData[]; caret?: boolean };

const groups: GroupData[] = [
  {
    title: '构建', w: 572, tools: [
      { icon: 'wall', text: '墙', w: 47, caret: 'below' },
      { icon: 'door', text: '门', w: 46 },
      { icon: 'window', text: '窗', w: 52 },
      { icon: 'component', text: '构件', w: 56, caret: 'below' },
      { icon: 'column', text: '柱', w: 50, caret: 'below' },
      { icon: 'roof', text: '屋顶', w: 58, caret: 'below' },
      { icon: 'ceiling', text: '天花板', w: 50 },
      { icon: 'floor', text: '楼板', w: 62, caret: 'below' },
      { icon: 'curtain', text: '幕墙\n系统', w: 48 },
      { icon: 'cgrid', text: '幕墙\n网格', w: 48 },
      { icon: 'mullion', text: '竖梃', w: 48 },
    ],
  },
  {
    title: '楼梯坡道', w: 191, tools: [
      { icon: 'railing', text: '栏杆扶手', w: 88, caret: 'below' },
      { icon: 'ramp', text: '坡道', w: 48 },
      { icon: 'stair', text: '楼梯', w: 48 },
    ],
  },
  {
    title: '模型', w: 155, tools: [
      { icon: 'letterA', text: '模型\n文字', w: 48 },
      { icon: 'mline', text: '模型\n线', w: 48 },
      { icon: 'mgroup', text: '模型\n组', w: 54, caret: 'side' },
    ],
  },
  {
    title: '房间和面积', w: 320, caret: true, tools: [
      { icon: 'room', text: '房间', w: 48 },
      { icon: 'roomSplit', text: '房间\n分隔', w: 48 },
      { icon: 'tagRoom', text: '标记\n房间', w: 58, caret: 'side' },
      { icon: 'area', text: '面积', w: 54, caret: 'below' },
      { icon: 'areaEdge', text: '面积\n边界', w: 46, dim: true },
      { icon: 'tagArea', text: '标记\n面积', w: 60, caret: 'side' },
    ],
  },
  {
    title: '洞口', w: 251, tools: [
      { icon: 'openFace', text: '按\n面', w: 44 },
      { icon: 'shaft', text: '竖井', w: 54 },
      { icon: 'wallOpen', text: '墙', w: 44 },
      { icon: 'vertOpen', text: '垂直', w: 52 },
      { icon: 'dormer', text: '老虎窗', w: 48 },
    ],
  },
  {
    title: '基准', w: 152, tools: [
      { icon: 'level', text: '标高', w: 48, dim: true },
      { icon: 'gridAxes', text: '轴网', w: 48 },
      { icon: 'refPlane', text: '参照\n平面', w: 50 },
    ],
  },
];

type Prop = { name: string; value?: string; kind?: 'input' | 'button' | 'check'; dim?: boolean };

const sections: { title: string; rows: Prop[] }[] = [
  {
    title: '图形', rows: [
      { name: '视图比例', value: '1 : 100', kind: 'input' },
      { name: '比例值 1:', value: '100', dim: true },
      { name: '显示模型', value: '标准' },
      { name: '详细程度', value: '粗略' },
      { name: '零件可见性', value: '显示原状态' },
      { name: '可见性/图形...', value: '编辑...', kind: 'button' },
      { name: '图形显示选项', value: '编辑...', kind: 'button' },
      { name: '方向', value: '项目北' },
      { name: '墙连接显示', value: '清理所有墙连接' },
      { name: '规程', value: '建筑' },
      { name: '显示隐藏线', value: '按规程' },
      { name: '颜色方案位置', value: '背景' },
      { name: '颜色方案', value: '<无>', kind: 'button' },
      { name: '系统颜色方案', value: '编辑...', kind: 'button' },
      { name: '默认分析显示...', value: '无' },
      { name: '日光路径', kind: 'check' },
    ],
  },
  {
    title: '基线', rows: [
      { name: '范围: 底部标高', value: '无' },
      { name: '范围: 顶部标高', value: '无边界', dim: true },
      { name: '基线方向', value: '俯视', dim: true },
    ],
  },
  {
    title: '范围', rows: [
      { name: '裁剪视图', kind: 'check' },
      { name: '裁剪区域可见', kind: 'check' },
    ],
  },
];

type Guide = 'first-' | '-' | '+' | '+end' | 'line' | 'tee' | 'elbow';

const tree: { guides: Guide[]; icon?: string; text: string; on?: boolean }[] = [
  { guides: ['first-'], icon: 'views', text: '视图 (全部)' },
  { guides: ['line', '-'], text: '楼层平面' },
  { guides: ['line', 'line', 'tee'], text: '场地' },
  { guides: ['line', 'line', 'tee'], text: '标高 1', on: true },
  { guides: ['line', 'line', 'elbow'], text: '标高 2' },
  { guides: ['line', '+'], text: '天花板平面' },
  { guides: ['line', '+'], text: '三维视图' },
  { guides: ['line', '+end'], text: '立面 (建筑立面)' },
  { guides: ['tee'], icon: 'legend', text: '图例' },
  { guides: ['tee'], icon: 'schedule', text: '明细表/数量' },
  { guides: ['tee'], icon: 'sheet', text: '图纸 (全部)' },
  { guides: ['+'], icon: 'family', text: '族' },
  { guides: ['+'], icon: 'group', text: '组' },
  { guides: ['elbow'], icon: 'link', text: 'Revit 链接' },
];

const tabs = ['建筑', '结构', '系统', '插入', '注释', '分析', '体量和场地', '协作', '视图', '管理', '附加模块', '修改'];

const viewTools: [string, string][] = [
  ['detail', '详细程度'], ['style', '视觉样式'], ['sunOff', '日光路径'], ['shadeOff', '阴影'],
  ['cropOff', '裁剪视图'], ['cropShow', '显示裁剪区域'], ['glasses', '临时隐藏/隔离'], ['bulb', '显示隐藏的图元'],
  ['reveal', '临时视图属性'], ['analytic', '分析模型'], ['constraint', '显示约束'],
];

/* ---------- parts ---------- */

const RibbonTool = ({ t }: { t: ToolData }) => (
  <Tool $w={t.w} $dim={t.dim}>
    <Art name={t.icon} />
    <ToolText>
      <ToolLabel>{t.text}</ToolLabel>
      {t.caret === 'side' && <SideCaret><Caret /></SideCaret>}
    </ToolText>
    {t.caret === 'below' && <BelowCaret><Caret /></BelowCaret>}
  </Tool>
);

const PropRow = ({ p }: { p: Prop }) => {
  let value: React.ReactNode = p.value;
  if (p.kind === 'input') value = <ValueInput aria-label={p.name} defaultValue={p.value} />;
  if (p.kind === 'button') value = <ValueButton aria-label={`${p.name} ${p.value}`}>{p.value}</ValueButton>;
  if (p.kind === 'check') value = <Check type="checkbox" aria-label={p.name} />;
  return (
    <tr>
      <Cell $name $dim={p.dim}>{p.name}</Cell>
      <Cell $dim={p.dim} $flush={p.kind === 'input' || p.kind === 'button'}>{value}</Cell>
      <Cell />
    </tr>
  );
};

const GuideCell = ({ g }: { g: Guide }) => {
  const box = g.includes('-') || g.includes('+');
  const lines = (
    <svg width="26" height="22" viewBox="0 0 26 22" shapeRendering="crispEdges">
      <g stroke="#8a90a8" strokeDasharray="1 1">
        {g !== 'first-' && <path d="M11.5 0v11" />}
        {g !== 'elbow' && g !== '+end' && <path d="M11.5 11v11" />}
        {g !== 'line' && <path d="M11 11.5h15" />}
      </g>
      {box && <rect x="5.5" y="5.5" width="12" height="12" fill="#f4f4f4" stroke="#8f8f92" />}
      {box && <path d={g.includes('+') ? 'M7 11.5h9M11.5 7v9' : 'M7 11.5h9'} stroke="#2c4fa0" />}
    </svg>
  );
  return box ? <Toggle aria-label={g.includes('+') ? '展开' : '折叠'}>{lines}</Toggle> : lines;
};

const DoubleUp = () => (
  <svg width="7" height="9" viewBox="0 0 7 9" fill="none" stroke="#111" strokeWidth="1.4">
    <path d="m1 4 2.5-3L6 4M1 8l2.5-3L6 8" />
  </svg>
);

const Plan = () => (
  <Drawing viewBox="0 0 1309 737" preserveAspectRatio="xMidYMid meet" role="img" aria-label="楼层平面">
    <path d="M1 343.5H1294" stroke="#1c5a1c" strokeDasharray="1 1" pathLength="77" shapeRendering="crispEdges" />
    <path d="M363.5 18.5h649v649h-649z" fill="#58595a" />
    <path d="M363.5 18.5h649v649L688 343z" fill="#4c4c4c" />
    <path d="M363.5 18.5h649v649h-649zM363.5 18.5l649 649M1012.5 18.5l-649 649" fill="none" stroke="#000" shapeRendering="crispEdges" />
    <path d="M688.5 3v722" stroke="#0b7a0b" strokeDasharray="1 1" pathLength="43" shapeRendering="crispEdges" />
  </Drawing>
);

const NavTools = () => (
  <svg width="32" height="114" viewBox="0 0 32 114" fill="none" stroke="#a6a7aa" strokeWidth="1.5">
    <circle cx="26" cy="5" r="3.5" />
    <path d="m24 3 4 4M28 3l-4 4" strokeWidth="1" />
    <path d="M4 30q0-10 9-10h9v10q0 9-9 9t-9-9z" fill="#e6eaec" />
    <circle cx="13" cy="29" r="5" />
    <text x="15" y="42" fontSize="11" fill="#5f88b8" stroke="none" fontFamily="Open Sans, sans-serif">2D</text>
    <path d="M12 48h6l-3 4z" fill="#888" stroke="none" />
    <path d="M4 57h24" stroke="#ccc2c0" strokeWidth="1" />
    <path d="M8 65h11v10H8z" fill="#a9cf9d" stroke="#88b080" />
    <circle cx="18" cy="75" r="4" fill="#f2f2f2" />
    <path d="m21 78 4 4" strokeWidth="2" />
    <path d="M12 91h6l-3 4z" fill="#888" stroke="none" />
    <circle cx="26" cy="107" r="3.5" />
    <path d="M24 107h4" />
  </svg>
);

export default function App() {
  return (
    <Frame>
      <Global />
      <Defs />
      <TitleBar>
        <TitleItems>
          <QuickTool $w={31} aria-label="应用程序菜单"><Icon name="logo" /></QuickTool>
          <QuickTool $w={36} aria-label="打开"><Icon name="open" /></QuickTool>
          <QuickTool $w={24} aria-label="保存"><Icon name="save" /></QuickTool>
          <QuickTool $w={36} aria-label="同步"><Icon name="sync" /></QuickTool>
          <QuickTool $w={10} aria-label="同步选项"><Caret /></QuickTool>
          <QuickTool $w={36} aria-label="放弃"><Icon name="undo" /></QuickTool>
          <QuickTool $w={8} aria-label="放弃列表"><Caret /></QuickTool>
          <QuickTool $w={36} aria-label="重做"><Icon name="redo" /></QuickTool>
          <QuickTool $w={10} aria-label="重做列表"><Caret /></QuickTool>
          <QuickTool $w={35} aria-label="打印"><Icon name="print" /></QuickTool>
          <QuickGap $w={2} /><QuickRule /><QuickGap $w={2} />
          <QuickTool $w={33} aria-label="测量"><Icon name="ruler" /></QuickTool>
          <QuickTool $w={12} aria-label="测量选项"><Caret /></QuickTool>
          <QuickTool $w={25} aria-label="对齐尺寸标注"><Icon name="dim" /></QuickTool>
          <QuickTool $w={40} aria-label="标记"><Icon name="tag" /></QuickTool>
          <QuickTool $w={22} aria-label="文字"><Icon name="text" /></QuickTool>
          <QuickGap $w={9} /><QuickRule /><QuickGap $w={9} />
          <QuickTool $w={20} aria-label="三维视图"><Icon name="cube" /></QuickTool>
          <QuickTool $w={24} aria-label="三维视图选项"><Caret /></QuickTool>
          <QuickTool $w={20} aria-label="剖面"><Icon name="section" /></QuickTool>
          <QuickGap $w={6} />
          <QuickTool $w={30} $active aria-label="细线"><Icon name="thin" /></QuickTool>
          <QuickGap $w={4} /><QuickRule /><QuickGap $w={6} />
          <QuickTool $w={26} aria-label="关闭隐藏窗口"><Icon name="closeWin" /></QuickTool>
          <QuickGap $w={4} />
          <QuickTool $w={24} aria-label="切换窗口"><Icon name="windows" /></QuickTool>
          <QuickTool $w={14} aria-label="切换窗口列表"><Caret /></QuickTool>
          <QuickGap $w={5} />
          <QuickTool $w={26} aria-label="编辑"><Icon name="edit" /></QuickTool>
          <QuickGap $w={4} />
          <QuickTool $w={14} aria-label="自定义快速访问工具栏"><Caret big /></QuickTool>
          <WindowTitle>{'Autodesk Revit 2016 -     项目3 - 楼层平面: 标高 1'}</WindowTitle>
          <QuickTool $w={16} aria-label="信息中心"><Caret /></QuickTool>
          <Search aria-label="搜索" placeholder="键入关键字或短语" />
          <QuickTool $w={28} aria-label="查找"><Icon name="find" /></QuickTool>
          <QuickTool $w={32} aria-label="通讯中心"><Icon name="dish" /></QuickTool>
          <QuickTool $w={28} aria-label="收藏夹"><Icon name="star" /></QuickTool>
          <QuickTool $w={32} aria-label="用户"><Icon name="user" /></QuickTool>
          <SignIn>登录</SignIn>
          <QuickGap $w={64} />
          <QuickTool $w={12} aria-label="登录选项"><Caret /></QuickTool>
          <QuickTool $w={42} aria-label="Exchange Apps"><Icon name="exchange" /></QuickTool>
          <QuickRule />
          <QuickTool $w={44} aria-label="帮助"><Icon name="help" /></QuickTool>
          <QuickTool $w={8} aria-label="帮助选项"><Caret /></QuickTool>
          <QuickGap $w={26} />
          <QuickTool $w={14} aria-label="最小化">
            <svg width="10" height="6" viewBox="0 0 10 6"><path d="M0 4h10" stroke="#333" strokeWidth="3" /></svg>
          </QuickTool>
        </TitleItems>
      </TitleBar>

      <Tabs>
        <Tab $file>文件</Tab>
        {tabs.map((t, i) => <Tab key={t} $active={i === 0}>{t}</Tab>)}
        <Collapse aria-label="最小化功能区">
          <svg width="19" height="12" viewBox="0 0 19 12">
            <rect x="1" y="1" width="17" height="10" rx="3" fill="#efefef" stroke="#666a72" strokeWidth="1.5" />
            <path d="m6 8 3-4 4 4z" fill="#333" />
          </svg>
          <Caret />
        </Collapse>
      </Tabs>

      <Ribbon>
        <Group $w={62}>
          <GroupTools>
            <ModifyTool $w={48}>
              <Art name="arrow" />
              <ToolText><ToolLabel>修改</ToolLabel></ToolText>
            </ModifyTool>
          </GroupTools>
          <GroupTitle>选择 <Caret big /></GroupTitle>
        </Group>
        {groups.map(g => (
          <Group key={g.title} $w={g.w}>
            <GroupTools>{g.tools.map(t => <RibbonTool key={t.icon} t={t} />)}</GroupTools>
            <GroupTitle>{g.title}{g.caret && <Caret big />}</GroupTitle>
          </Group>
        ))}
        <Group $w={160}>
          <GroupTools>
            <Tool $w={46}>
              <Art name="setPlane" />
              <ToolText><ToolLabel>设置</ToolLabel></ToolText>
            </Tool>
            <SmallTools>
              <SmallTool><Icon name="showPlane" />显示</SmallTool>
              <SmallTool><Icon name="edit" />参照平面</SmallTool>
              <SmallTool><Icon name="viewer" />查看器</SmallTool>
            </SmallTools>
          </GroupTools>
          <GroupTitle>工作平面</GroupTitle>
        </Group>
      </Ribbon>

      <Main>
        <Dock $w={273}>
          <DockTitle>
            属性
            <button aria-label="关闭">
              <svg width="11" height="11" viewBox="0 0 11 11"><path d="m1 1 9 9M10 1l-9 9" stroke="#111" strokeWidth="2" /></svg>
            </button>
          </DockTitle>
          <PropsBox>
            <TypePicker>
              <TypeThumb><Art name="plan" /></TypeThumb>
              <TypeName>楼层平面</TypeName>
              <Caret big />
            </TypePicker>
            <InstanceRow>
              <SelectWrap>
                <InstanceSelect aria-label="实例">
                  <option>楼层平面: 标高 1</option>
                </InstanceSelect>
                <svg width="10" height="6" viewBox="0 0 10 6" fill="none" stroke="#555"><path d="m1 0 4 5 4-5" /></svg>
              </SelectWrap>
              <EditType><Icon name="typeEdit" size={16} />编辑类型</EditType>
            </InstanceRow>
            <GridArea>
              <GridClip>
                <PropTable>
                  <colgroup>
                    <col width="118" />
                    <col width="117" />
                    <col width="15" />
                  </colgroup>
                  {sections.map(s => (
                    <tbody key={s.title}>
                      <tr>
                        <SectionHead colSpan={3}>
                          <SectionInner>{s.title}<DoubleUp /></SectionInner>
                        </SectionHead>
                      </tr>
                      {s.rows.map(p => <PropRow key={p.name} p={p} />)}
                    </tbody>
                  ))}
                </PropTable>
              </GridClip>
              <ScrollV>
                <ScrollButton aria-label="向上滚动"><Chevron dir="up" /></ScrollButton>
                <ThumbV $n={335} />
                <Grow $n={203} />
                <ScrollButton aria-label="向下滚动"><Chevron dir="down" /></ScrollButton>
              </ScrollV>
            </GridArea>
            <PropsFooter>
              <HelpLink href="#help">属性帮助</HelpLink>
              <Apply disabled>应用</Apply>
            </PropsFooter>
          </PropsBox>
        </Dock>

        <View>
          <ViewBody>
            <Canvas>
              <Plan />
              <MdiButtons>
                <button aria-label="最小化视图">
                  <svg width="14" height="14" viewBox="0 0 14 14"><rect x="1" y="8" width="11" height="3" fill="#fff" stroke="#555" /></svg>
                </button>
                <button aria-label="还原视图">
                  <svg width="14" height="14" viewBox="0 0 14 14" fill="#fff" stroke="#444" strokeWidth="1.3">
                    <path d="M4 1h8v8H4zM1 4h8v8H1z" /><path d="M4 7h2v2H4z" />
                  </svg>
                </button>
                <button aria-label="关闭视图">
                  <svg width="14" height="14" viewBox="0 0 14 14">
                    <path d="M2 2h3l2 3 2-3h3L9 7l3 5H9L7 9l-2 3H2l3-5z" fill="#fff" stroke="#444" strokeWidth="1.3" />
                  </svg>
                </button>
              </MdiButtons>
              <NavBar><NavTools /></NavBar>
            </Canvas>
            <ScrollV>
              <ScrollButton aria-label="向上滚动"><Chevron dir="up" /></ScrollButton>
              <Grow $n={336} />
              <ThumbV />
              <Grow $n={337} />
              <ScrollButton aria-label="向下滚动"><Chevron dir="down" /></ScrollButton>
            </ScrollV>
          </ViewBody>
          <ViewBar>
            <ScaleButton>1 : 100</ScaleButton>
            {viewTools.map(([icon, label]) => (
              <ViewTool key={icon} aria-label={label}><Icon name={icon} size={19} /></ViewTool>
            ))}
            <ScrollButton aria-label="向左滚动"><Chevron dir="left" /></ScrollButton>
            <Grow $n={418} />
            <ThumbH />
            <Grow $n={417} />
            <ScrollButton aria-label="向右滚动"><Chevron dir="right" /></ScrollButton>
            <svg width="22" height="20" viewBox="0 0 22 20">
              <path d="M8 15h3v3H8zM12 15h3v3h-3zM16 15h3v3h-3zM12 11h3v3h-3zM16 11h3v3h-3zM16 7h3v3h-3z" fill="#b9b9bb" />
            </svg>
          </ViewBar>
        </View>

        <Dock $w={183}>
          <DockTitle>项目浏览器 - 项目3</DockTitle>
          <TreeBox>
            {tree.map(row => (
              <TreeRow key={row.text}>
                {row.guides.map((g, i) => <GuideCell key={i} g={g} />)}
                {row.icon && <Icon name={row.icon} />}
                <TreeLabel $on={row.on}>{row.text}</TreeLabel>
              </TreeRow>
            ))}
          </TreeBox>
        </Dock>
      </Main>

      <StatusBar>
        <StatusSlot $before={711} $w={254} />
        <StatusSlot $before={127} $w={286} />
      </StatusBar>

      <Meter>
        <Ball>44%</Ball>
        <Speeds>
          <Speed>
            <svg width="8" height="9" viewBox="0 0 8 9"><path d="M4 0l4 4H5v5H3V4H0z" fill="#ef5a3c" /></svg>
            0K/s
          </Speed>
          <Speed>
            <svg width="8" height="9" viewBox="0 0 8 9"><path d="M4 9l4-4H5V0H3v5H0z" fill="#2f9e52" /></svg>
            0K/s
          </Speed>
        </Speeds>
      </Meter>
    </Frame>
  );
}
